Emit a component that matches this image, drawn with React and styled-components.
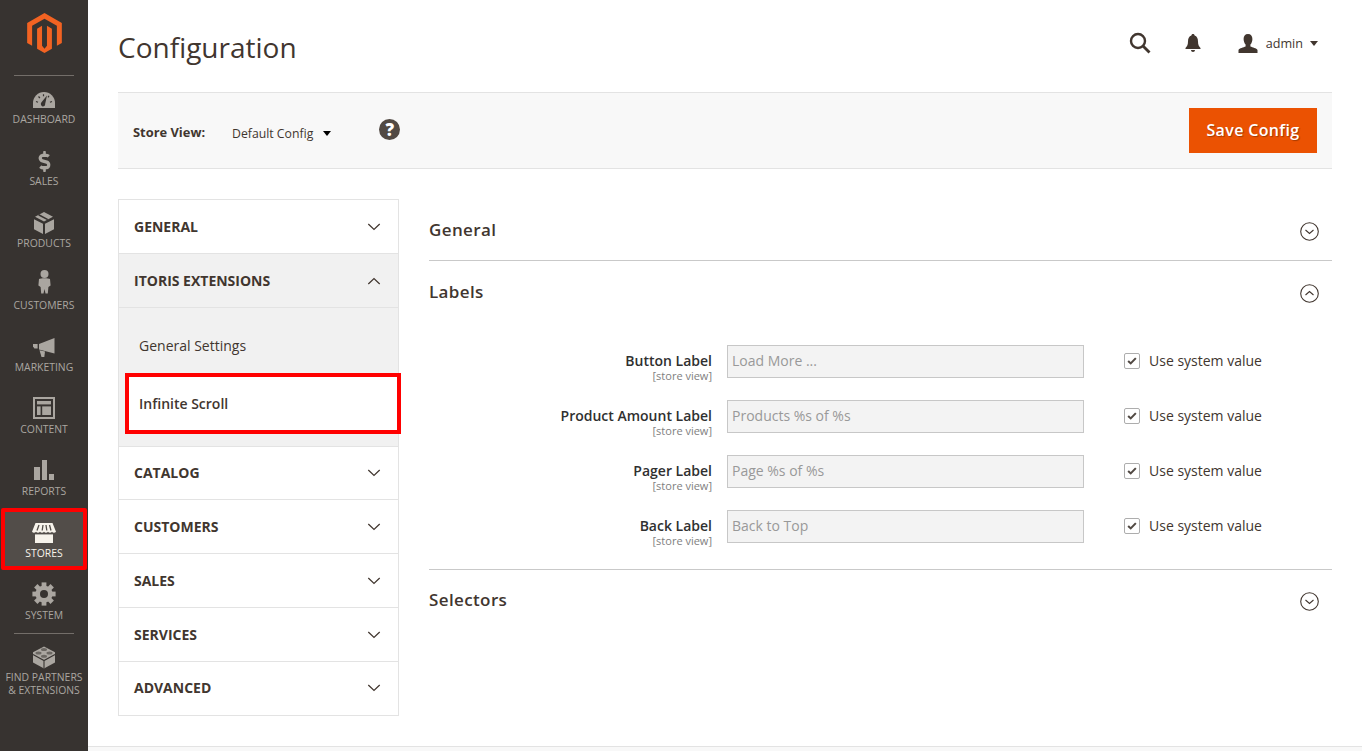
import React from "react";
import styled, { createGlobalStyle } from "styled-components";
import { FaDollarSign } from "react-icons/fa";

const Global = createGlobalStyle`
  html, body { margin: 0; padding: 0; height: 100%; background: #fff; overflow: hidden; }
  #root { height: 100%; }
  * { box-sizing: border-box; }
  body { font-family: "Open Sans", "Liberation Sans", sans-serif; color: #41362f; }
`;

const Page = styled.div`display: flex; height: 751px; overflow: hidden;`;
const Side = styled.nav`width: 88px; flex: none; background: #373330; display: flex; flex-direction: column; align-items: stretch;`;
const LogoBlock = styled.div`height: 75px; flex: none; padding-top: 13px; display: flex; justify-content: center; align-items: flex-start;`;
const Rule = styled.div`height: 1px; flex: none; margin: ${p => p.$m || "0 14px"}; background: #736e69;`;
const MenuList = styled.div`margin-top: -2px; display: flex; flex-direction: column;`;
const MenuItem = styled.a`
  height: 62px; flex: none; padding-top: 14px; display: flex; flex-direction: column; align-items: center;
  color: ${p => (p.$active ? "#f7f3eb" : "#aaa6a0")};
  background: ${p => (p.$active ? "#524d49" : "transparent")};
  ${p => p.$active && "margin: 0 1px; padding-top: 10px; border: 4px solid #ff0000; border-radius: 2px;"}
  ${p => p.$tall && "height: 90px; margin-top: -2px;"}
`;
const IconBox = styled.div`height: 24px; width: 24px; flex: none; display: flex; justify-content: center; align-items: center; color: inherit; & svg { overflow: visible; display: block; }`;
const MenuLabel = styled.span`font-size: 10.4px; line-height: 13px; margin-top: 1px; text-transform: uppercase; text-align: center; white-space: nowrap;`;

const Main = styled.main`flex: 1; min-width: 0; display: flex; flex-direction: column;`;
const Content = styled.div`flex: 1; padding: 0 30px;`;
const Header = styled.header`height: 92px; display: flex; align-items: center; justify-content: space-between; padding-bottom: 6px;`;
const Title = styled.h1`margin: 7px 0 0; font-size: 28px; font-weight: 400; color: #41362f; line-height: 36px;`;
const Actions = styled.div`display: flex; align-items: center; padding-right: 14px;`;
const Action = styled.div`display: flex; align-items: center; color: #41362f; margin-left: ${p => p.$ml}px;`;
const UserName = styled.span`font-size: 12.6px; margin-left: 8px; color: #41362f;`;
const Caret = styled.span`width: 0; height: 0; border-left: 4px solid transparent; border-right: 4px solid transparent; border-top: 5px solid ${p => p.$c || "#41362f"}; margin-left: ${p => p.$ml}px; margin-top: ${p => p.$mt || 0}px;`;

const Toolbar = styled.div`height: 77px; background: #f8f8f8; border-top: 1px solid #e3e3e3; border-bottom: 1px solid #e3e3e3; display: flex; align-items: center; padding: 0 15px;`;
const StoreLabel = styled.span`font-size: 12.9px; font-weight: 700; color: #41362f; width: 99px; margin-top: 3px;`;
const StoreValue = styled.span`font-size: 12.25px; color: #41362f; margin-top: 6px;`;
const Help = styled.span`width: 21px; height: 21px; border-radius: 50%; background: #514943; color: #fff; font-weight: 800; font-size: 17px; line-height: 21px; text-align: center; margin-left: 48px; margin-top: -2px;`;
const SaveButton = styled.button`margin-left: auto; width: 128px; height: 45px; border: 0; padding: 0 0 2px; background: #eb5202; color: #fff; font-family: inherit; font-size: 16px; font-weight: 600; text-shadow: 1px 1px 1px rgba(0,0,0,.3); letter-spacing: .35px;`;

const Columns = styled.div`display: flex; gap: 30px; margin-top: 30px;`;
const LeftNav = styled.aside`width: 281px; flex: none; border: 1px solid #e3e3e3; height: 517px;`;
const NavHead = styled.div`height: ${p => (p.$first ? 52.8 : 53.75)}px; display: flex; align-items: center; justify-content: space-between; padding: 0 17px 0 15px; font-size: 14px; font-weight: 700; text-transform: uppercase; color: #41362f; background: ${p => (p.$open ? "#f1f1f1" : "#fff")}; border-top: ${p => (p.$first ? "0" : "1px solid #e3e3e3")}; & svg { margin-top: 1px; }`;
const SubPanel = styled.div`height: 139px; background: #f1f1f1; border-top: 1px solid #e3e3e3; padding: 9px 0 0 6px;`;
const SubItem = styled.div`height: 56px; display: flex; align-items: center; padding: 2px 0 0 14px; font-size: 14px; color: #41362f;`;
const SubItemActive = styled.div`height: 61px; width: 276px; display: flex; align-items: center; padding-left: 10px; font-size: 14px; font-weight: 600; color: #41362f; background: #fff; border: 4px solid #ff0000; position: relative;`;

const Right = styled.section`flex: 1; min-width: 0;`;
const Section = styled.div`border-bottom: ${p => (p.$line ? "1px solid #c9c9c9" : "0")};`;
const SectionHead = styled.div`height: ${p => p.$h || 61}px; display: flex; align-items: center; justify-content: space-between; padding-right: 13px; font-size: 17px; font-weight: 600; letter-spacing: .38px; color: #41362f; & svg { margin-top: 3px; }`;
const Fields = styled.div`padding: 23px 0 26px; display: flex; flex-direction: column; gap: 22px;`;
const FieldRow = styled.div`display: flex; height: 33px; align-items: flex-start;`;
const LabelCol = styled.div`width: 283px; flex: none; text-align: right; padding-top: 7px;`;
const FieldName = styled.div`font-size: 14px; font-weight: 600; line-height: 17px; color: #303030;`;
const Scope = styled.div`font-size: 11px; line-height: 12px; color: #808080; margin-top: 1px;`;
const TextField = styled.input`width: 357px; height: 33px; margin: 0 0 0 15px; padding: 0 4px 2px; border: 1px solid #c7c7c7; background: #f3f3f3; font-family: inherit; font-size: 14px; color: #999; opacity: 1; -webkit-text-fill-color: #999;`;
const CheckWrap = styled.label`display: flex; align-items: center; margin-left: 40px; height: 31px; font-size: 14px; color: #41362f;`;
const Check = styled.span`width: 16px; height: 16px; border: 1px solid #adadad; border-radius: 2px; background: #fff; display: flex; align-items: center; justify-content: center; margin-right: 9px;`;
const FooterBar = styled.div`height: 5px; flex: none; background: #f8f8f8; border-top: 1px solid #e3e3e3;`;

const c = "currentColor";
const bg = "#373330";
const Dashboard = () => (
  <svg width="24" height="24" viewBox="0 0 24 24">
    <path d="M1 20V15A11 11 0 0 1 23 15V20Z" fill={c} />
    <path d="M10.5 18.5A2.6 2.6 0 0 1 9.3 14.6L15 7.5 13.2 15.8A2.6 2.6 0 0 1 10.5 18.5Z" fill={bg} />
    <path d="M4 13.5l2 .8M6.5 8.5l1.4 1.5M11.5 6.2v2M17 7.8l-1 1.6M20 13.5l-2 .8" stroke={bg} strokeWidth="1.2" />
  </svg>
);
const Products = () => (
  <svg width="24" height="24" viewBox="0 0 24 24">
    <path d="M12 0L21 4.8 12 9.6 3 4.8Z" fill={c} />
    <path d="M6.6 2.8L15.8 7.6" stroke={bg} strokeWidth="1.6" />
    <path d="M2 7.2L11 11.8V22L2 17.2Z" fill={c} />
    <path d="M22 7.2L13 11.8V22L22 17.2Z" fill={c} />
  </svg>
);
const Customers = () => (
  <svg width="24" height="24" viewBox="0 0 24 24">
    <circle cx="12.5" cy="0" r="4" fill={c} />
    <path d="M7 5C8.5 4 16.5 4 18 5L18.6 11.5 16.4 13 15.8 19.5H13.5L12.5 15 11.5 19.5H9.2L8.6 13 6.4 11.5Z" fill={c} />
  </svg>
);
const Marketing = () => (
  <svg width="24" height="24" viewBox="0 0 24 24">
    <path d="M1 8H5.6V12.5H2.4L1 10.5Z" fill={c} />
    <path d="M7 8L22.5 2V17.5L7 13.5Z" fill={c} />
    <path d="M7.5 14.2L13 15.5 12.3 21H9.5Z" fill={c} />
  </svg>
);
const ContentIcon = () => (
  <svg width="24" height="24" viewBox="0 0 24 24">
    <rect x="2" y="0" width="20" height="20" fill="none" stroke={c} strokeWidth="2" />
    <rect x="5" y="3" width="14" height="3.4" fill={c} />
    <rect x="5" y="8.4" width="3.6" height="8.6" fill={c} />
    <rect x="10.2" y="8.4" width="8.8" height="8.6" fill={c} />
  </svg>
);
const Reports = () => (
  <svg width="24" height="24" viewBox="0 0 24 24">
    <rect x="2" y="7" width="6" height="13" fill={c} />
    <rect x="10" y="0" width="5" height="20" fill={c} />
    <rect x="17" y="14" width="5" height="6" fill={c} />
  </svg>
);
const Stores = () => (
  <svg width="24" height="24" viewBox="0 0 24 24">
    <path d="M3.5 1H20.5L24 9.8C23 11.2 20.8 11.2 20 9.8 19 11.2 17 11.2 16 9.8 15 11.2 13 11.2 12 9.8 11 11.2 9 11.2 8 9.8 7 11.2 5 11.2 4 9.8 3 11.2 1 11.2 0 9.8Z" fill={c} />
    <path d="M7 3L5 8.5M11 3L10.2 8.5M14 3L14.8 8.5M17.5 3L19 8.5" stroke="#524d49" strokeWidth="1.3" />
    <path d="M3 12.4H21V21H3Z" fill={c} />
  </svg>
);
const Gear = () => (
  <svg width="24" height="24" viewBox="0 0 24 24">
    <g transform="translate(12 10)">
      <circle r="8.6" fill={c} />
      {[0, 45, 90, 135, 180, 225, 270, 315].map(a => (
        <rect key={a} x="-2.4" y="-11.6" width="4.8" height="5" fill={c} transform={`rotate(${a})`} />
      ))}
      <circle r="4" fill={bg} />
    </g>
  </svg>
);
const Lego = () => (
  <svg width="24" height="24" viewBox="0 0 24 24">
    <path d="M12 .5L23 6.2V16.5L12 22.5 1 16.5V6.2Z" fill={c} />
    <path d="M1 8.5L12 14.5 23 8.5M12 14.5V22.5" stroke={bg} strokeWidth="1.1" fill="none" />
    <ellipse cx="12" cy="3.6" rx="3" ry="1.5" fill={bg} opacity=".55" />
    <ellipse cx="6.5" cy="7" rx="3" ry="1.5" fill={bg} opacity=".55" />
    <ellipse cx="17.5" cy="7" rx="3" ry="1.5" fill={bg} opacity=".55" />
    <ellipse cx="12" cy="10.2" rx="3" ry="1.5" fill={bg} opacity=".55" />
  </svg>
);
const Logo = () => (
  <svg width="35" height="40" viewBox="0 0 20.8 24">
    <path d="M10.4 24L5.95 21.43V9.43L8.92 7.72V19.72L10.4 21.43 11.88 19.72V7.72L14.85 9.43V21.43ZM20.8 6V18L17.83 19.72V7.72L10.4 3.43 2.97 7.72V19.72L0 18V6L10.4 0Z" fill="#f26322" />
  </svg>
);
const Search = () => (
  <svg width="22" height="22" viewBox="0 0 22 22" fill="none" stroke="#41362f">
    <circle cx="9" cy="9" r="7" strokeWidth="2.4" />
    <path d="M14 14L20.5 20.5" strokeWidth="2.8" />
  </svg>
);
const Bell = () => (
  <svg width="16" height="18" viewBox="0 0 16 18" fill="#41362f">
    <path d="M8 0C9 0 9.6.6 9.6 1.6 12 2.4 13 4.6 13 7.5 13 11 14 12.5 15.5 14V15H.5V14C2 12.5 3 11 3 7.5 3 4.6 4 2.4 6.4 1.6 6.4.6 7 0 8 0Z" />
    <path d="M6 16H10C10 17.2 9.1 18 8 18S6 17.2 6 16Z" />
  </svg>
);
const User = () => (
  <svg width="20" height="19" viewBox="0 0 20 19" fill="#41362f">
    <path d="M10 0C13 0 14.4 2 14.4 5 14.4 7.5 13.4 9.6 12.4 10.6V12.5C14.5 13.5 18.5 14 19.5 16V19H.5V16C1.5 14 5.5 13.5 7.6 12.5V10.6C6.6 9.6 5.6 7.5 5.6 5 5.6 2 7 0 10 0Z" />
  </svg>
);
const Chevron = ({ up }) => (
  <svg width="14" height="8" viewBox="0 0 14 8" fill="none" stroke="#41362f" strokeWidth="1.25">
    <path d={up ? "M1.3 7L7 1.6 12.7 7" : "M1.3 1L7 6.4 12.7 1"} />
  </svg>
);
const CircleChevron = ({ up }) => (
  <svg width="19" height="19" viewBox="0 0 19 19" fill="none" stroke="#41362f">
    <circle cx="9.5" cy="9.5" r="8.8" strokeWidth="1.1" />
    <path d={up ? "M5.5 11L9.5 7.5 13.5 11" : "M5.5 8L9.5 11.5 13.5 8"} strokeWidth="1.1" />
  </svg>
);
const Tick = () => (
  <svg width="10" height="8" viewBox="0 0 12 10" fill="none" stroke="#514943" strokeWidth="2.6">
    <path d="M1.2 5L4.4 8 10.8 1.4" />
  </svg>
);
const Dollar = styled(FaDollarSign)`margin-top: -2px;`;

const menu = [
  ["Dashboard", <Dashboard />],
  ["Sales", <Dollar size={21} />],
  ["Products", <Products />],
  ["Customers", <Customers />],
  ["Marketing", <Marketing />],
  ["Content", <ContentIcon />],
  ["Reports", <Reports />],
  ["Stores", <Stores />, true],
  ["System", <Gear />],
];
const lowerNav = ["Catalog", "Customers", "Sales", "Services", "Advanced"];
const fields = [
  ["Button Label", "Load More ..."],
  ["Product Amount Label", "Products %s of %s"],
  ["Pager Label", "Page %s of %s"],
  ["Back Label", "Back to Top"],
];

export default function App() {
  return (
    <Page>
      <Global />
      <Side>
        <LogoBlock><Logo /></LogoBlock>
        <Rule />
        <MenuList>
          {menu.map(([label, icon, active]) => (
            <MenuItem key={label} $active={active}>
              <IconBox>{icon}</IconBox>
              <MenuLabel>{label}</MenuLabel>
            </MenuItem>
          ))}
          <Rule $m="1px 14px 0" />
          <MenuItem $tall>
            <IconBox><Lego /></IconBox>
            <MenuLabel>Find Partners<br />&amp; Extensions</MenuLabel>
          </MenuItem>
        </MenuList>
      </Side>
      <Main>
        <Content>
          <Header>
            <Title>Configuration</Title>
            <Actions>
              <Action><Search /></Action>
              <Action $ml={33.5}><Bell /></Action>
              <Action $ml={37}><User /><UserName>admin</UserName><Caret $ml={7} /></Action>
            </Actions>
          </Header>
          <Toolbar>
            <StoreLabel>Store View:</StoreLabel>
            <StoreValue>Default Config</StoreValue>
            <Caret $c="#000" $ml={10} $mt={5} />
            <Help>?</Help>
            <SaveButton>Save Config</SaveButton>
          </Toolbar>
          <Columns>
            <LeftNav>
              <NavHead $first>General<Chevron /></NavHead>
              <NavHead $open>Itoris Extensions<Chevron up /></NavHead>
              <SubPanel>
                <SubItem>General Settings</SubItem>
                <SubItemActive>Infinite Scroll</SubItemActive>
              </SubPanel>
              {lowerNav.map(n => <NavHead key={n}>{n}<Chevron /></NavHead>)}
            </LeftNav>
            <Right>
              <Section $line>
                <SectionHead>General<CircleChevron /></SectionHead>
              </Section>
              <Section $line>
                <SectionHead>Labels<CircleChevron up /></SectionHead>
                <Fields>
                  {fields.map(([name, val]) => (
                    <FieldRow key={name}>
                      <LabelCol>
                        <FieldName>{name}</FieldName>
                        <Scope>[store view]</Scope>
                      </LabelCol>
                      <TextField disabled value={val} readOnly />
                      <CheckWrap><Check><Tick /></Check>Use system value</CheckWrap>
                    </FieldRow>
                  ))}
                </Fields>
              </Section>
              <Section>
                <SectionHead $h={59}>Selectors<CircleChevron /></SectionHead>
              </Section>
            </Right>
          </Columns>
        </Content>
        <FooterBar />
      </Main>
    </Page>
  );
}
